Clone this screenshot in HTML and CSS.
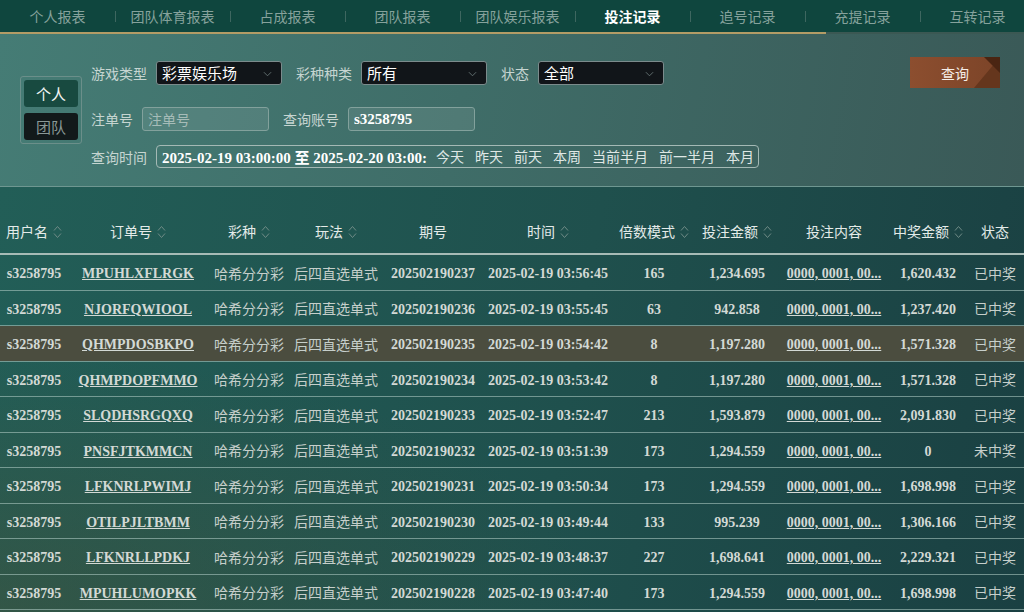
FILE: index.html
```html
<!DOCTYPE html>
<html lang="zh-CN">
<head>
    <meta charset="UTF-8">
    <meta name="viewport" content="width=device-width, initial-scale=1.0">
    <title>投注记录</title>
    <link rel="stylesheet" href="styles.css">
</head>
<body>
    <svg class="icon-sprite" xmlns="http://www.w3.org/2000/svg">
        <symbol id="sort" viewBox="0 0 9 18">
            <path d="M1 7.5 L4.5 3.5 L8 7.5" fill="none" stroke="currentColor" stroke-width="1"/>
            <path d="M1 10.5 L4.5 14.5 L8 10.5" fill="none" stroke="currentColor" stroke-width="1"/>
        </symbol>
        <symbol id="chev" viewBox="0 0 10 6">
            <path d="M1 1 L5 5 L9 1" fill="none" stroke="currentColor" stroke-width="1"/>
        </symbol>
    </svg>

    <nav class="top-nav">
        <a href="#">个人报表</a>
        <a href="#">团队体育报表</a>
        <a href="#">占成报表</a>
        <a href="#">团队报表</a>
        <a href="#">团队娱乐报表</a>
        <a href="#" class="active">投注记录</a>
        <a href="#">追号记录</a>
        <a href="#">充提记录</a>
        <a href="#">互转记录</a>
    </nav>
    <div class="nav-line"></div>

    <div class="filter-panel">
        <div class="scope-toggle">
            <button class="scope-btn on">个人</button>
            <button class="scope-btn">团队</button>
        </div>

        <div class="filter-form">
            <div class="filter-row">
                <label class="field-label">游戏类型</label>
                <div class="select-box">彩票娱乐场<svg class="chev"><use href="#chev"/></svg></div>
                <label class="field-label">彩种种类</label>
                <div class="select-box">所有<svg class="chev"><use href="#chev"/></svg></div>
                <label class="field-label">状态</label>
                <div class="select-box">全部<svg class="chev"><use href="#chev"/></svg></div>
            </div>
            <div class="filter-row row-2">
                <label class="field-label">注单号</label>
                <input type="text" class="text-field" placeholder="注单号">
                <label class="field-label">查询账号</label>
                <input type="text" class="text-field bold-value" value="s3258795">
            </div>
            <div class="filter-row row-3">
                <label class="field-label">查询时间</label>
                <div class="date-box">
                    <input type="text" class="date-range" value="2025-02-19 03:00:00 至 2025-02-20 03:00:00" readonly>
                    <a href="#" class="quick">今天</a>
                    <a href="#" class="quick">昨天</a>
                    <a href="#" class="quick">前天</a>
                    <a href="#" class="quick">本周</a>
                    <a href="#" class="quick">当前半月</a>
                    <a href="#" class="quick">前一半月</a>
                    <a href="#" class="quick">本月</a>
                </div>
            </div>
        </div>

        <button class="search-btn">查询</button>
    </div>

    <div class="records">
        <table class="record-table">
            <colgroup>
                <col style="width:68px"><col style="width:140px"><col style="width:82px"><col style="width:92px">
                <col style="width:102px"><col style="width:128px"><col style="width:84px"><col style="width:82px">
                <col style="width:112px"><col style="width:76px"><col style="width:58px">
            </colgroup>
            <thead>
                <tr>
                    <th>用户名<svg class="sort"><use href="#sort"/></svg></th>
                    <th>订单号<svg class="sort"><use href="#sort"/></svg></th>
                    <th>彩种<svg class="sort"><use href="#sort"/></svg></th>
                    <th>玩法<svg class="sort"><use href="#sort"/></svg></th>
                    <th>期号</th>
                    <th>时间<svg class="sort"><use href="#sort"/></svg></th>
                    <th>倍数模式<svg class="sort"><use href="#sort"/></svg></th>
                    <th>投注金额<svg class="sort"><use href="#sort"/></svg></th>
                    <th>投注内容</th>
                    <th>中奖金额<svg class="sort"><use href="#sort"/></svg></th>
                    <th>状态</th>
                </tr>
            </thead>
            <tbody>
                <tr>
                    <td class="num">s3258795</td><td class="num"><a href="#">MPUHLXFLRGK</a></td><td>哈希分分彩</td><td>后四直选单式</td>
                    <td class="num">202502190237</td><td class="num">2025-02-19 03:56:45</td><td class="num">165</td><td class="num">1,234.695</td>
                    <td class="num"><a href="#">0000, 0001, 00...</a></td><td class="num">1,620.432</td><td>已中奖</td>
                </tr>
                <tr>
                    <td class="num">s3258795</td><td class="num"><a href="#">NJORFQWIOOL</a></td><td>哈希分分彩</td><td>后四直选单式</td>
                    <td class="num">202502190236</td><td class="num">2025-02-19 03:55:45</td><td class="num">63</td><td class="num">942.858</td>
                    <td class="num"><a href="#">0000, 0001, 00...</a></td><td class="num">1,237.420</td><td>已中奖</td>
                </tr>
                <tr class="hovered">
                    <td class="num">s3258795</td><td class="num"><a href="#">QHMPDOSBKPO</a></td><td>哈希分分彩</td><td>后四直选单式</td>
                    <td class="num">202502190235</td><td class="num">2025-02-19 03:54:42</td><td class="num">8</td><td class="num">1,197.280</td>
                    <td class="num"><a href="#">0000, 0001, 00...</a></td><td class="num">1,571.328</td><td>已中奖</td>
                </tr>
                <tr>
                    <td class="num">s3258795</td><td class="num"><a href="#">QHMPDOPFMMO</a></td><td>哈希分分彩</td><td>后四直选单式</td>
                    <td class="num">202502190234</td><td class="num">2025-02-19 03:53:42</td><td class="num">8</td><td class="num">1,197.280</td>
                    <td class="num"><a href="#">0000, 0001, 00...</a></td><td class="num">1,571.328</td><td>已中奖</td>
                </tr>
                <tr>
                    <td class="num">s3258795</td><td class="num"><a href="#">SLQDHSRGQXQ</a></td><td>哈希分分彩</td><td>后四直选单式</td>
                    <td class="num">202502190233</td><td class="num">2025-02-19 03:52:47</td><td class="num">213</td><td class="num">1,593.879</td>
                    <td class="num"><a href="#">0000, 0001, 00...</a></td><td class="num">2,091.830</td><td>已中奖</td>
                </tr>
                <tr>
                    <td class="num">s3258795</td><td class="num"><a href="#">PNSFJTKMMCN</a></td><td>哈希分分彩</td><td>后四直选单式</td>
                    <td class="num">202502190232</td><td class="num">2025-02-19 03:51:39</td><td class="num">173</td><td class="num">1,294.559</td>
                    <td class="num"><a href="#">0000, 0001, 00...</a></td><td class="num">0</td><td>未中奖</td>
                </tr>
                <tr>
                    <td class="num">s3258795</td><td class="num"><a href="#">LFKNRLPWIMJ</a></td><td>哈希分分彩</td><td>后四直选单式</td>
                    <td class="num">202502190231</td><td class="num">2025-02-19 03:50:34</td><td class="num">173</td><td class="num">1,294.559</td>
                    <td class="num"><a href="#">0000, 0001, 00...</a></td><td class="num">1,698.998</td><td>已中奖</td>
                </tr>
                <tr>
                    <td class="num">s3258795</td><td class="num"><a href="#">OTILPJLTBMM</a></td><td>哈希分分彩</td><td>后四直选单式</td>
                    <td class="num">202502190230</td><td class="num">2025-02-19 03:49:44</td><td class="num">133</td><td class="num">995.239</td>
                    <td class="num"><a href="#">0000, 0001, 00...</a></td><td class="num">1,306.166</td><td>已中奖</td>
                </tr>
                <tr>
                    <td class="num">s3258795</td><td class="num"><a href="#">LFKNRLLPDKJ</a></td><td>哈希分分彩</td><td>后四直选单式</td>
                    <td class="num">202502190229</td><td class="num">2025-02-19 03:48:37</td><td class="num">227</td><td class="num">1,698.641</td>
                    <td class="num"><a href="#">0000, 0001, 00...</a></td><td class="num">2,229.321</td><td>已中奖</td>
                </tr>
                <tr>
                    <td class="num">s3258795</td><td class="num"><a href="#">MPUHLUMOPKK</a></td><td>哈希分分彩</td><td>后四直选单式</td>
                    <td class="num">202502190228</td><td class="num">2025-02-19 03:47:40</td><td class="num">173</td><td class="num">1,294.559</td>
                    <td class="num"><a href="#">0000, 0001, 00...</a></td><td class="num">1,698.998</td><td>已中奖</td>
                </tr>
            </tbody>
        </table>
    </div>
</body>
</html>
```

FILE: styles.css
```css
body {
    margin: 0;
    width: 1024px;
    height: 612px;
    overflow: hidden;
    font-family: "Noto Sans CJK SC", "Noto Sans", sans-serif;
    background: #1d4a48;
}
.icon-sprite {
    display: none;
}
.top-nav {
    display: flex;
    height: 32px;
    overflow: hidden;
    background: #0f463e;
}
.top-nav a {
    flex: none;
    width: 115px;
    position: relative;
    text-align: center;
    line-height: 32px;
    font-size: 14px;
    color: #86a29c;
    text-decoration: none;
}
.top-nav a + a::before {
    content: "";
    position: absolute;
    left: 0;
    top: 11px;
    width: 1px;
    height: 11px;
    background: #3e6760;
}
.top-nav a.active {
    color: #ffffff;
    font-weight: 700;
}
.nav-line {
    height: 2px;
    background: linear-gradient(to right, #b39c66 0, #b39c66 826px, #3b5853 826px);
}
.filter-panel {
    display: flex;
    align-items: center;
    height: 152px;
    padding-left: 20px;
    background: linear-gradient(100deg, #457c75 0%, #3f6d68 45%, #3a5957 100%);
    border-bottom: 1px solid #6f9791;
}
.scope-toggle {
    display: flex;
    flex-direction: column;
    gap: 6px;
    width: 54px;
    padding: 3px;
    border: 1px solid #6b8f8a;
    border-radius: 3px;
}
.scope-btn {
    height: 27px;
    border: none;
    border-radius: 3px;
    font-family: inherit;
    font-size: 15px;
    background: #12191a;
    color: #8a9896;
}
.scope-btn.on {
    background: #184a40;
    color: #f2f5f4;
}
.filter-form {
    margin-left: 9px;
    margin-top: 9px;
}
.filter-row {
    display: flex;
    align-items: center;
    height: 24px;
}
.row-2 {
    margin-top: 22px;
}
.row-3 {
    margin-top: 14px;
    height: 23px;
}
.field-label {
    font-size: 14px;
    color: #c6d5d1;
    margin-right: 9px;
    white-space: nowrap;
}
.select-box {
    position: relative;
    box-sizing: border-box;
    width: 126px;
    height: 24px;
    margin-right: 14px;
    padding-left: 5px;
    line-height: 22px;
    font-size: 15px;
    color: #ffffff;
    background: #111519;
    border: 1px solid #7b8b8c;
    border-radius: 3px;
}
.chev {
    position: absolute;
    right: 9px;
    top: 9px;
    width: 9px;
    height: 6px;
    color: #687676;
}
.text-field {
    box-sizing: border-box;
    width: 127px;
    height: 24px;
    margin: 0 14px 0 0;
    padding: 0 5px;
    font-family: inherit;
    font-size: 14px;
    color: #ffffff;
    background: rgba(255, 255, 255, 0.09);
    border: 1px solid #82a19c;
    border-radius: 3px;
    outline: none;
}
.text-field::placeholder {
    color: #a6bcb8;
}
.bold-value {
    font-family: "Liberation Serif", serif;
    font-weight: 700;
    font-size: 15px;
}
.date-box {
    display: flex;
    align-items: center;
    box-sizing: border-box;
    width: 603px;
    height: 23px;
    border: 1px solid #a4b9b5;
    border-radius: 4px;
}
.date-range {
    flex: none;
    box-sizing: border-box;
    width: 270px;
    height: 21px;
    margin: 0 3.5px 0 0;
    padding: 0 0 0 5px;
    border: none;
    outline: none;
    background: transparent;
    font-family: "Liberation Serif", "Noto Sans CJK SC", serif;
    font-weight: 700;
    font-size: 15px;
    color: #ffffff;
}
.quick {
    padding: 0 5.5px;
    font-size: 14px;
    line-height: 21px;
    color: #dfe7e5;
    text-decoration: none;
    white-space: nowrap;
}
.search-btn {
    position: relative;
    align-self: flex-start;
    width: 90px;
    height: 31px;
    margin: 23px 24px 0 auto;
    border: none;
    overflow: hidden;
    font-family: inherit;
    font-size: 14px;
    color: #f6eee8;
    background: linear-gradient(to right, #8c4e2f, #7c4428);
}
.search-btn::before {
    content: "";
    position: absolute;
    right: 0;
    top: 0;
    width: 26px;
    height: 100%;
    background: #65361d;
    clip-path: polygon(100% 0, 100% 100%, 0 100%);
}
.search-btn::after {
    content: "";
    position: absolute;
    right: 0;
    top: 0;
    width: 16px;
    height: 16px;
    background: #4a2512;
    clip-path: polygon(0 0, 100% 0, 100% 100%);
}
.records {
    height: 425px;
    padding-top: 25px;
    box-sizing: border-box;
    background:
        radial-gradient(ellipse 600px 260px at 0 100%, rgba(72, 78, 52, 0.45), rgba(72, 78, 52, 0) 100%),
        linear-gradient(100deg, #225e57 0%, #1f504d 55%, #1a4042 100%);
}
.record-table {
    width: 1024px;
    table-layout: fixed;
    border-collapse: collapse;
}
.record-table th {
    height: 37px;
    padding: 0 0 4px;
    font-size: 14px;
    font-weight: 400;
    color: #e4ebe9;
    border-bottom: 2px solid #a7bbb6;
    white-space: nowrap;
}
.sort {
    width: 9px;
    height: 18px;
    margin-left: 5px;
    vertical-align: -4px;
    color: #6f8b86;
}
.record-table td {
    height: 30.5px;
    padding: 1px 0 0;
    text-align: center;
    font-size: 14px;
    color: #c6cfcb;
    border-bottom: 1px solid rgba(170, 198, 192, 0.6);
    white-space: nowrap;
    overflow: hidden;
}
.record-table td.num {
    padding-top: 4px;
    font-family: "Liberation Serif", serif;
    font-weight: 700;
    font-size: 14px;
    color: #d3d9d5;
}
.record-table td a {
    color: #d3d9d5;
    text-decoration: underline;
}
.record-table tr.hovered td {
    background: #4b4d3f;
}
```
